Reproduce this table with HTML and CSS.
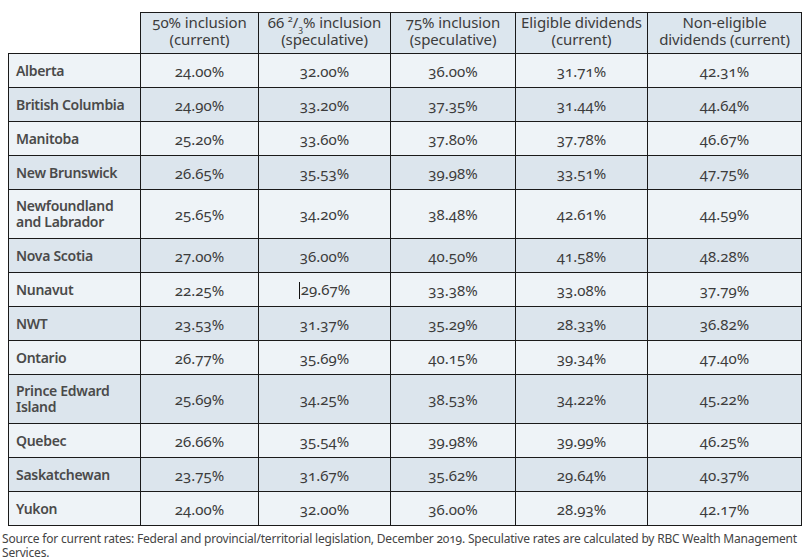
FILE: index.html
```html
<!DOCTYPE html>
<html>
<head>
<meta charset="utf-8">
<link rel="stylesheet" href="styles.css">
</head>
<body>
<table class="rates">
  <colgroup>
    <col class="c1"><col class="c2"><col class="c3"><col class="c4"><col class="c5"><col class="c6">
  </colgroup>
  <thead>
    <tr>
      <th class="blank"></th>
      <th>50% inclusion<br>(current)</th>
      <th>66 <sup>2</sup>/<sub>3</sub>% inclusion<br>(speculative)</th>
      <th>75% inclusion<br>(speculative)</th>
      <th>Eligible dividends<br>(current)</th>
      <th>Non-eligible<br>dividends (current)</th>
    </tr>
  </thead>
  <tbody>
    <tr class="light"><td class="name">Alberta</td><td>24.00%</td><td>32.00%</td><td>36.00%</td><td>31.71%</td><td>42.31%</td></tr>
    <tr class="dark"><td class="name">British Columbia</td><td>24.90%</td><td>33.20%</td><td>37.35%</td><td>31.44%</td><td>44.64%</td></tr>
    <tr class="light"><td class="name">Manitoba</td><td>25.20%</td><td>33.60%</td><td>37.80%</td><td>37.78%</td><td>46.67%</td></tr>
    <tr class="dark"><td class="name">New Brunswick</td><td>26.65%</td><td>35.53%</td><td>39.98%</td><td>33.51%</td><td>47.75%</td></tr>
    <tr class="light tall"><td class="name">Newfoundland<br>and Labrador</td><td>25.65%</td><td>34.20%</td><td>38.48%</td><td>42.61%</td><td>44.59%</td></tr>
    <tr class="dark"><td class="name">Nova Scotia</td><td>27.00%</td><td>36.00%</td><td>40.50%</td><td>41.58%</td><td>48.28%</td></tr>
    <tr class="light"><td class="name">Nunavut</td><td>22.25%</td><td><span class="caret"></span>29.67%</td><td>33.38%</td><td>33.08%</td><td>37.79%</td></tr>
    <tr class="dark"><td class="name">NWT</td><td>23.53%</td><td>31.37%</td><td>35.29%</td><td>28.33%</td><td>36.82%</td></tr>
    <tr class="light"><td class="name">Ontario</td><td>26.77%</td><td>35.69%</td><td>40.15%</td><td>39.34%</td><td>47.40%</td></tr>
    <tr class="dark tall"><td class="name">Prince Edward<br>Island</td><td>25.69%</td><td>34.25%</td><td>38.53%</td><td>34.22%</td><td>45.22%</td></tr>
    <tr class="light"><td class="name">Quebec</td><td>26.66%</td><td>35.54%</td><td>39.98%</td><td>39.99%</td><td>46.25%</td></tr>
    <tr class="dark"><td class="name">Saskatchewan</td><td>23.75%</td><td>31.67%</td><td>35.62%</td><td>29.64%</td><td>40.37%</td></tr>
    <tr class="light"><td class="name">Yukon</td><td>24.00%</td><td>32.00%</td><td>36.00%</td><td>28.93%</td><td>42.17%</td></tr>
  </tbody>
</table>
<p class="source">Source for current rates: Federal and provincial/territorial legislation, December 2019. Speculative rates are calculated by RBC Wealth Management Services.</p>
</body>
</html>
```

FILE: styles.css
```css
html, body {
  margin: 0;
  padding: 0;
  background: #ffffff;
}
body {
  font-family: "Noto Sans", "Open Sans", sans-serif;
  color: #3c3c3c;
  font-size: 15px;
  font-variant-numeric: oldstyle-nums;
  font-feature-settings: "onum" 1;
}
.rates {
  border-collapse: collapse;
  table-layout: fixed;
  width: 793px;
  margin: 12px 0 0 8px;
}
.c1 { width: 132px; }
.c2 { width: 118px; }
.c3 { width: 132px; }
.c4 { width: 125px; }
.c5 { width: 132px; }
.c6 { width: 154px; }
.rates th, .rates td {
  border: 1px solid #1a1a1a;
  padding: 0;
  text-align: center;
  vertical-align: middle;
}
.rates th {
  background: #dce6ee;
  font-weight: normal;
  height: 41px;
  line-height: 17px;
  padding-bottom: 5px;
  box-sizing: border-box;
  letter-spacing: -0.1px;
}
.rates th.blank {
  background: transparent;
  border-top: none;
  border-left: none;
}
.rates td {
  height: 33px;
  line-height: 16px;
}
.rates tr.tall td {
  height: 48px;
}
.rates tr.light td { background: #eef3f7; }
.rates tr.dark td { background: #dce5ed; }
.rates td.name {
  text-align: left;
  font-size: 14px;
  font-weight: 600;
  letter-spacing: -0.3px;
  padding-left: 7px;
  color: #4a4a4a;
}
sup, sub {
  font-size: 9px;
  line-height: 0;
}
.caret {
  display: inline-block;
  width: 0;
  height: 17px;
  border-left: 1px solid #111;
  vertical-align: -4px;
  margin-right: 1px;
}
.source {
  margin: 6px 0 0 2px;
  font-size: 12px;
  letter-spacing: -0.2px;
  line-height: 14px;
  color: #444;
}
```
